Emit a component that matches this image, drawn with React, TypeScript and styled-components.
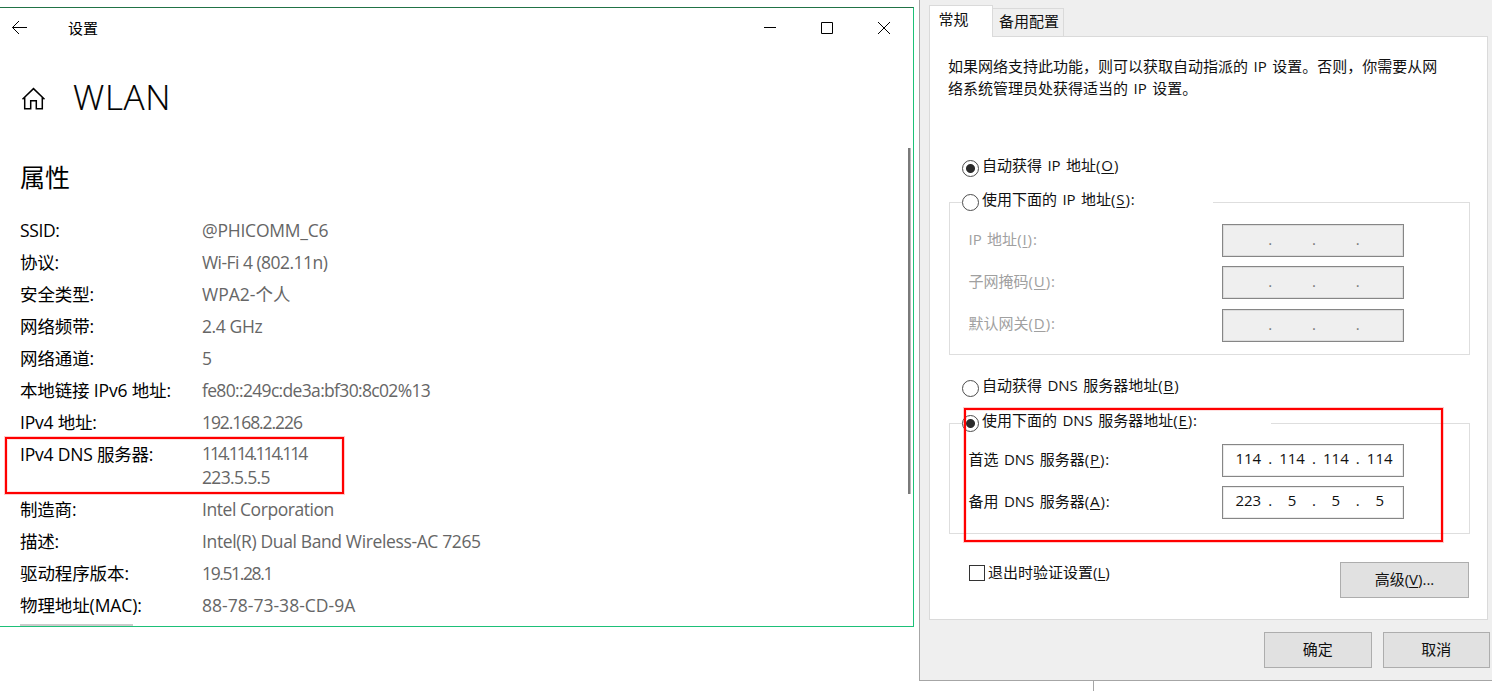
import React from "react";
import styled, { createGlobalStyle } from "styled-components";

const GlobalStyle = createGlobalStyle`
  *, *::before, *::after { box-sizing: border-box; }
  body {
    margin: 0;
    background: #fff;
    font-family: "Open Sans", "Noto Sans CJK SC", sans-serif;
    color: #000;
    overflow: hidden;
  }
`;

const Desktop = styled.div`
  position: relative;
  display: flex;
  width: 1492px;
  height: 691px;
  background: #fff;
`;

/* ---------- Settings window ---------- */

const SettingsWindow = styled.main`
  position: relative;
  display: flex;
  flex-direction: column;
  width: 914px;
  height: 620px;
  margin-top: 7px;
  border: 1px solid #1dc078;
  border-top-color: #217346;
  border-left: 0;
  overflow: hidden;
`;

const TitleBar = styled.header`
  display: flex;
  align-items: center;
  flex: none;
  height: 39px;
  padding: 0 23px 0 11px;
`;

const WindowTitle = styled.span`
  flex: 1;
  margin-left: 40px;
  font-size: 15px;
  line-height: 20px;
`;

const WindowControls = styled.div`
  display: flex;
  gap: 45px;
`;

const PageHeader = styled.div`
  display: flex;
  align-items: center;
  flex: none;
  height: 60px;
  margin-top: 21px;
  padding-left: 21px;
`;

const PageTitle = styled.h1`
  margin: -2px 0 0 27px;
  font-size: 35px;
  font-weight: 300;
  line-height: 50px;
  letter-spacing: 0.7px;
  -webkit-text-stroke: 0.2px #000;
`;

const SectionTitle = styled.h2`
  flex: none;
  margin: 33px 0 21px 20px;
  font-size: 25px;
  font-weight: 400;
  line-height: 32px;
`;

const PropertyList = styled.dl`
  flex: none;
  margin: 0;
  padding-left: 20px;
`;

const Property = styled.div`
  display: flex;
  padding: 4px 0;
  font-size: 17.5px;
  line-height: 24px;
  white-space: nowrap;
`;

const Term = styled.dt<{ $track?: number }>`
  width: 182px;
  letter-spacing: ${(p) => p.$track ?? 0}px;
`;

const Value = styled.dd<{ $multi: boolean }>`
  margin: ${(p) => (p.$multi ? -1 : 0)}px 0 0;
  color: #666;
`;

const ValueLine = styled.div<{ $track: number }>`
  letter-spacing: ${(p) => p.$track}px;
`;

const CopyButtonEdge = styled.div`
  flex: none;
  width: 113px;
  height: 20px;
  margin: 3px 0 0 20px;
  background: #ccc;
`;

const ScrollThumb = styled.div`
  position: absolute;
  top: 140px;
  right: 2px;
  width: 3px;
  height: 346px;
  background: #7a7a7a;
  border-right: 1px solid #b8b8b8;
`;

const Highlight = styled.div<{ $x: number; $y: number; $w: number; $h: number }>`
  position: absolute;
  left: ${(p) => p.$x}px;
  top: ${(p) => p.$y}px;
  width: ${(p) => p.$w}px;
  height: ${(p) => p.$h}px;
  border: 2px solid #f00;
  box-shadow: 0 0 0 1px rgba(255, 0, 0, 0.2), inset 0 0 0 1px rgba(255, 0, 0, 0.12);
  pointer-events: none;
`;

/* ---------- Network properties dialog ---------- */

const Dialog = styled.aside`
  display: flex;
  flex-direction: column;
  flex: none;
  width: 573px;
  height: 681px;
  margin-left: 5px;
  padding: 5px 0 0 9px;
  background: #efefef;
  border-left: 1px solid #a6a6a6;
  border-bottom: 1px solid #a6a6a6;
  font-size: 15px;
  color: #111;
  white-space: nowrap;
`;

const Tabs = styled.div`
  display: flex;
  align-items: flex-end;
  flex: none;
  height: 31px;
`;

const Tab = styled.div<{ $active?: boolean }>`
  position: relative;
  width: ${(p) => (p.$active ? 64 : 71)}px;
  height: ${(p) => (p.$active ? 32 : 28)}px;
  margin-bottom: ${(p) => (p.$active ? -1 : 0)}px;
  padding-left: ${(p) => (p.$active ? 8.5 : 6)}px;
  line-height: ${(p) => (p.$active ? 27 : 25)}px;
  background: ${(p) => (p.$active ? "#fff" : "#efefef")};
  border: 1px solid #dadada;
  border-bottom: 0;
  border-left-width: ${(p) => (p.$active ? 1 : 0)}px;
`;

const TabPanel = styled.section`
  display: flex;
  flex-direction: column;
  flex: none;
  width: 559px;
  height: 584px;
  padding: 19px 17px 0 19px;
  background: #fff;
  border: 1px solid #dadada;
`;

const Intro = styled.p`
  margin: 0 0 0 -1px;
  height: 101px;
  line-height: 21.5px;
  word-spacing: 1.6px;
`;

const OptionRow = styled.div<{ $top?: number }>`
  display: flex;
  margin: ${(p) => p.$top ?? 0}px 0 0 13px;
  height: 22px;
`;

const RadioDot = styled.span<{ $on?: boolean }>`
  flex: none;
  width: 17px;
  height: 17px;
  margin: 3px 3px 0 0;
  border: 1.5px solid #4d4d4d;
  border-radius: 50%;
  background: ${(p) => (p.$on ? "radial-gradient(circle, #2b2b2b 4px, #fff 5px)" : "#fff")};
`;

const LabelText = styled.span`
  line-height: 20px;
  height: 20px;
  margin-top: -2px;
  word-spacing: 1.5px;
`;

const FieldLabel = styled(LabelText)`
  margin-top: -4px;
  padding-left: 0.5px;
`;

const Accelerator = styled.span`
  letter-spacing: 0.9px;
`;

const Key = styled.u`
  text-underline-offset: 2px;
  text-decoration-thickness: 1px;
`;

const Group = styled.fieldset<{ $h: number; $top: number }>`
  flex: none;
  width: 521px;
  height: ${(p) => p.$h}px;
  margin: ${(p) => p.$top}px 0 0;
  padding: 0 65px 0 18px;
  border: 1px solid #dedede;
  min-width: 0;
`;

const GroupLegend = styled.legend<{ $w: number }>`
  display: flex;
  width: ${(p) => p.$w}px;
  height: 22px;
  margin-left: -6px;
  padding: 0;
`;

const Fields = styled.div<{ $top: number }>`
  display: flex;
  flex-direction: column;
  gap: 9.4px;
  margin-top: ${(p) => p.$top}px;
`;

const Field = styled.label<{ $disabled?: boolean }>`
  display: flex;
  justify-content: space-between;
  align-items: center;
  height: 33px;
  color: ${(p) => (p.$disabled ? "#a0a0a0" : "#111")};
`;

const IpBox = styled.span<{ $disabled?: boolean }>`
  display: flex;
  justify-content: center;
  width: 182px;
  height: 33px;
  padding-left: 2px;
  line-height: ${(p) => (p.$disabled ? 28 : 27)}px;
  border: 1px solid #868686;
  outline: 1px solid rgba(0, 0, 0, 0.08);
  outline-offset: -2px;
  background: ${(p) => (p.$disabled ? "#efefef" : "#fff")};
  color: ${(p) => (p.$disabled ? "#777" : "#111")};
`;

const Octet = styled.span`
  width: 33px;
  text-align: center;
`;

const Separator = styled.span`
  width: 10.8px;
  text-align: center;
`;

const PanelFooter = styled.div`
  display: flex;
  justify-content: space-between;
  margin: 28px 1px 0 20px;
`;

const CheckRow = styled.label`
  display: flex;
  gap: 3px;
  height: 22px;
  line-height: 20px;
`;

const CheckBox = styled.span`
  width: 16px;
  height: 16px;
  margin-top: 3px;
  border: 1.5px solid #333;
  background: #fff;
`;

const Button = styled.button<{ $w: number }>`
  width: ${(p) => p.$w}px;
  height: 36px;
  padding: 0 0 4px;
  border: 1px solid #adadad;
  background: #e1e1e1;
  font: inherit;
  color: #111;
`;

const DialogActions = styled.div`
  display: flex;
  justify-content: flex-end;
  gap: 11px;
  margin: 12px 2px 0 0;
`;

const Tick = styled.div`
  position: absolute;
  left: 1093px;
  top: 681px;
  width: 1px;
  height: 10px;
  background: #a6a6a6;
`;

type Line = [text: string, track: number];
type Row = { term: string; values: Line[]; track?: number };

const rows: Row[] = [
  { term: "SSID:", values: [["@PHICOMM_C6", -0.23]], track: -0.4 },
  { term: "协议:", values: [["Wi-Fi 4 (802.11n)", -0.54]], track: -0.2 },
  { term: "安全类型:", values: [["WPA2-个人", 0]], track: -0.1 },
  { term: "网络频带:", values: [["2.4 GHz", -0.4]], track: -0.1 },
  { term: "网络通道:", values: [["5", 0]], track: -0.1 },
  { term: "本地链接 IPv6 地址:", values: [["fe80::249c:de3a:bf30:8c02%13", -0.67]], track: -0.15 },
  { term: "IPv4 地址:", values: [["192.168.2.226", -1.08]], track: -0.2 },
  { term: "IPv4 DNS 服务器:", values: [["114.114.114.114", -1.97], ["223.5.5.5", -0.67]], track: -0.2 },
  { term: "制造商:", values: [["Intel Corporation", -0.44]], track: -0.2 },
  { term: "描述:", values: [["Intel(R) Dual Band Wireless-AC 7265", -0.37]], track: -0.2 },
  { term: "驱动程序版本:", values: [["19.51.28.1", -1.38]], track: -0.1 },
  { term: "物理地址(MAC):", values: [["88-78-73-38-CD-9A", 0.02]], track: -0.1 },
];

const Hotkey = ({ letter, tail = "" }: { letter: string; tail?: string }) => (
  <Accelerator>
    (<Key>{letter}</Key>){tail}
  </Accelerator>
);

const IpAddress = ({ octets, disabled }: { octets: string[]; disabled?: boolean }) => (
  <IpBox $disabled={disabled}>
    {octets.map((octet, i) => (
      <React.Fragment key={i}>
        {i > 0 && <Separator>.</Separator>}
        <Octet>{octet}</Octet>
      </React.Fragment>
    ))}
  </IpBox>
);

type IpFieldProps = { label: string; letter: string; octets?: string[]; disabled?: boolean };

const IpField = ({ label, letter, octets = ["", "", "", ""], disabled }: IpFieldProps) => (
  <Field $disabled={disabled}>
    <FieldLabel>
      {label}
      <Hotkey letter={letter} tail=":" />
    </FieldLabel>
    <IpAddress octets={octets} disabled={disabled} />
  </Field>
);

export default function App() {
  return (
    <Desktop>
      <GlobalStyle />
      <SettingsWindow>
        <TitleBar>
          <svg width="17" height="16" viewBox="0 0 17 16" fill="none" stroke="#000" strokeWidth="1">
            <path d="M16 7.5H1.5M8 1L1.5 7.5L8 14" />
          </svg>
          <WindowTitle>设置</WindowTitle>
          <WindowControls>
            <svg width="12" height="12" viewBox="0 0 12 12" stroke="#000"><path d="M0 5.5H12" /></svg>
            <svg width="12" height="12" viewBox="0 0 12 12" fill="none" stroke="#000"><path d="M.5 .5H11.5V11.5H.5Z" /></svg>
            <svg width="12" height="12" viewBox="0 0 12 12" stroke="#000"><path d="M0 0L12 12M12 0L0 12" /></svg>
          </WindowControls>
        </TitleBar>
        <PageHeader>
          <svg width="25" height="24" viewBox="0 0 25 24" fill="none" stroke="#000" strokeWidth="1.5">
            <path d="M1.5 13.3L12.5 2.6L23.5 13.3M3.7 11.5V22.7H9.7V14.7H15.3V22.7H21.3V11.5" />
          </svg>
          <PageTitle>WLAN</PageTitle>
        </PageHeader>
        <SectionTitle>属性</SectionTitle>
        <PropertyList>
          {rows.map((row) => (
            <Property key={row.term}>
              <Term $track={row.track}>{row.term}</Term>
              <Value $multi={row.values.length > 1}>
                {row.values.map(([text, track]) => (
                  <ValueLine key={text} $track={track}>{text}</ValueLine>
                ))}
              </Value>
            </Property>
          ))}
        </PropertyList>
        <CopyButtonEdge />
        <ScrollThumb />
      </SettingsWindow>

      <Dialog>
        <Tabs>
          <Tab $active>常规</Tab>
          <Tab>备用配置</Tab>
        </Tabs>
        <TabPanel>
          <Intro>
            如果网络支持此功能，则可以获取自动指派的 IP 设置。否则，你需要从网
            <br />
            络系统管理员处获得适当的 IP 设置。
          </Intro>
          <OptionRow>
            <RadioDot $on />
            <LabelText>自动获得 IP 地址<Hotkey letter="O" /></LabelText>
          </OptionRow>
          <Group $h={164} $top={12}>
            <GroupLegend $w={251}>
              <RadioDot />
              <LabelText>使用下面的 IP 地址<Hotkey letter="S" tail=":" /></LabelText>
            </GroupLegend>
            <Fields $top={11}>
              <IpField label="IP 地址" letter="I" disabled />
              <IpField label="子网掩码" letter="U" disabled />
              <IpField label="默认网关" letter="D" disabled />
            </Fields>
          </Group>
          <OptionRow $top={22}>
            <RadioDot />
            <LabelText>自动获得 DNS 服务器地址<Hotkey letter="B" /></LabelText>
          </OptionRow>
          <Group $h={122} $top={13}>
            <GroupLegend $w={309}>
              <RadioDot $on />
              <LabelText>使用下面的 DNS 服务器地址<Hotkey letter="E" tail=":" /></LabelText>
            </GroupLegend>
            <Fields $top={10}>
              <IpField label="首选 DNS 服务器" letter="P" octets={["114", "114", "114", "114"]} />
              <IpField label="备用 DNS 服务器" letter="A" octets={["223", "5", "5", "5"]} />
            </Fields>
          </Group>
          <PanelFooter>
            <CheckRow>
              <CheckBox />
              <span>退出时验证设置(<Key>L</Key>)</span>
            </CheckRow>
            <Button $w={129}>高级(<Key>V</Key>)...</Button>
          </PanelFooter>
        </TabPanel>
        <DialogActions>
          <Button $w={107.5}>确定</Button>
          <Button $w={107.5}>取消</Button>
        </DialogActions>
      </Dialog>

      <Highlight $x={5} $y={437} $w={339} $h={57} />
      <Highlight $x={964} $y={408} $w={479} $h={134} />
      <Tick />
    </Desktop>
  );
}
